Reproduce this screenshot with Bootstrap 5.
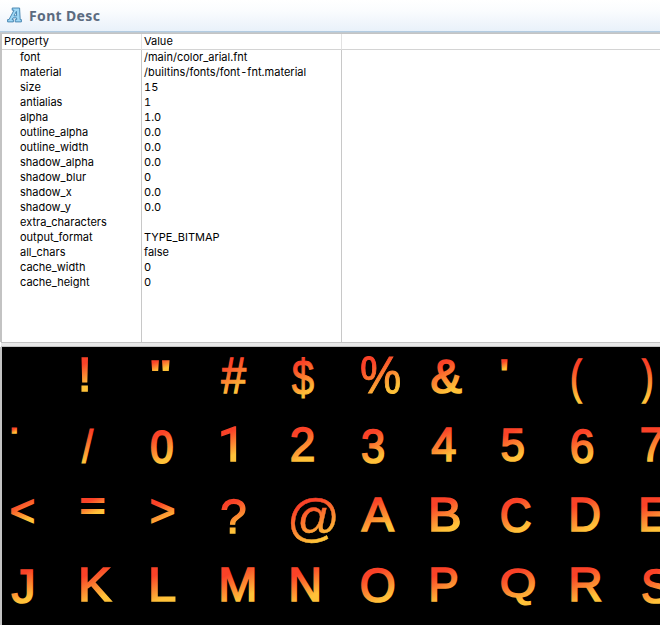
<!DOCTYPE html>
<html lang="en">
<head>
<meta charset="utf-8">
<meta name="viewport" content="width=device-width, initial-scale=1">
<title>Font Desc</title>
<link href="https://cdn.jsdelivr.net/npm/bootstrap@5.3.0/dist/css/bootstrap.min.css" rel="stylesheet">
<style>
html,body{height:100%}
body{font-family:Inter,"Liberation Sans",sans-serif;font-size:11px;line-height:15px;font-variant-numeric:tabular-nums;color:#000;background:#fff}
.title-bar{height:31px;padding:0 0 0 7px;background:linear-gradient(#fff,#fafcfe 35%,#e9f1fa)}
.title-bar h1{font:700 14px/20px "Noto Sans","Open Sans",sans-serif;color:#5b6b80;margin:1px 0 0 7px;letter-spacing:.35px}
.top-rule{height:3px;background:linear-gradient(#b3cce2 0 1px,#c0c9d0 1px 2px,#c4c4c4 2px)}
.pane{border-left:2px solid #c3c3c3}
.props{height:308px}
.col-prop{width:140px}
.col-val{width:200px}
.props .head-cell{height:16px;border-bottom:1px solid #d4d4d4;padding-left:2px;line-height:15px}
.props .col-prop .head-cell,.props .col-val .head-cell{border-right:1px solid #e2e2e2}
.rows-cell{height:292px;border-right:1px solid #c8c8c8}
.col-prop .rows-cell{padding-left:18px}
.col-val .rows-cell{padding-left:2px}
.rows-cell div{height:15px;white-space:pre}
.path-text{letter-spacing:.02px}
.splitter{height:5px;border:1px solid #c3c3c3;border-width:1px 0;background:#e8e8e8;margin-left:1px}
.preview{background:#000;height:278px;padding:7px 0 0 9px}
.glyph-row{height:70px}
.glyph{width:70px;height:70px;flex:none;overflow:visible;display:block}
</style>
<script src="https://cdn.jsdelivr.net/npm/bootstrap@5.3.0/dist/js/bootstrap.bundle.min.js"></script>
</head>
<body class="overflow-hidden">
<div class="vh-100 d-flex flex-column overflow-hidden">
  <header class="title-bar d-flex align-items-center flex-shrink-0">
    <svg width="15" height="17" viewBox="0 0 15 17" aria-hidden="true">
      <path d="M5.2 1h7.4l.6 11.6h1.2v2.3H8.2v-2.3h1.5l-.1-1.7H6l-.9 1.7h1.3v2.3H.6v-2.3H2L7 3.2H5.2zM7 8.8h2.6l-.2-4.4z" fill="#9fd8f6" fill-rule="evenodd" stroke="#3f7fab" stroke-width=".9" stroke-linejoin="round"/>
    </svg>
    <h1>Font Desc</h1>
  </header>
  <div class="top-rule flex-shrink-0"></div>
  <section class="props pane d-flex flex-shrink-0">
    <div class="col-prop">
      <div class="head-cell">Property</div>
      <div class="rows-cell"><div>font</div><div>material</div><div>size</div><div>antialias</div><div>alpha</div><div>outline_alpha</div><div>outline_width</div><div>shadow_alpha</div><div>shadow_blur</div><div>shadow_x</div><div>shadow_y</div><div>extra_characters</div><div>output_format</div><div>all_chars</div><div>cache_width</div><div>cache_height</div></div>
    </div>
    <div class="col-val">
      <div class="head-cell">Value</div>
      <div class="rows-cell"><div>/main/color_arial.fnt</div><div class="path-text">/builtins/fonts/font-fnt.material</div><div>15</div><div>1</div><div>1.0</div><div>0.0</div><div>0.0</div><div>0.0</div><div>0</div><div>0.0</div><div>0.0</div><div></div><div>TYPE_BITMAP</div><div>false</div><div>0</div><div>0</div></div>
    </div>
    <div class="flex-grow-1"><div class="head-cell"></div></div>
  </section>
  <div class="splitter flex-shrink-0"></div>
  <main class="preview pane flex-shrink-0 overflow-hidden" id="preview"></main>
</div>
<script>
// Each glyph: character, then its ink box inside a 70px cell: left, top, right, bottom.
const rows = [
  [[' ',0,0,1,1],['!',0,2.7,7,38],['"',0,5,18.3,16.7],['#',-.3,4,26,40],['$',.3,3,23.3,45.5],['%',0,3,39.3,40.5],['&',0,4,31,40.3],["'",0,5,6.3,17],['(',0,4,11.3,50],[')',.5,4,11.7,50]],
  [['.',0,3.5,6,10],['/',.5,4,13,40],['0',-.5,4.7,22.5,40.3],['1',0,2.4,15.3,38],['2',0,2.7,23.3,38],['3',.5,4.6,23.3,40.3],['4',0,2.7,25,38],['5',0,3,23,38.5],['6',0,4.6,22.5,40.3],['7',0,3,23,38]],
  [['<',0,5,23.5,30],['=',0,4,24,20.7],['>',0,5,23.7,30],['?',0,4,25,39.7],['@',0,4,45.3,50],['A',0,3,34,38],['B',0,3,29.3,38],['C',0,4,30,40],['D',0,3,29.3,38],['E',0,3,28,38]],
  [['J',.3,4.7,22.3,40.3],['K',0,3,30.7,38],['L',0,3,24.7,38],['M',0,3,34,38],['N',0,3,28,38],['O',0,4,33.5,40],['P',0,3,26.7,38],['Q',0,3,34,42],['R',0,3,30.7,38],['S',.5,4,29,40.3]]
];
const NS = 'http://www.w3.org/2000/svg';
const strokes = {'@': .4, '%': .9, '$': 1, '?': 1.3, '#': 1.2, '!': 1.3, '=': 2.3, '0': 2.1, '1': 1.3, '/': 1.2};
const ctx = document.createElement('canvas').getContext('2d');
const make = (tag, attrs, parent) => {
  const e = document.createElementNS(NS, tag);
  for (const k in attrs) e.setAttribute(k, attrs[k]);
  parent.appendChild(e);
  return e;
};
rows.forEach((row, r) => {
  const line = document.createElement('div');
  line.className = 'glyph-row d-flex';
  document.getElementById('preview').appendChild(line);
  row.forEach(([ch, l, t, rt, b], c) => {
    const svg = make('svg', {class: 'glyph', viewBox: '0 0 70 70'}, line);
    if (ch === ' ') return;
    const family = ch === '1' ? 'Roboto' : 'Liberation Sans';
    const stroke = strokes[ch] || 1.7;
    ctx.font = `480px "${family}"`;
    const m = ctx.measureText(ch);
    const left = -m.actualBoundingBoxLeft / 10, right = m.actualBoundingBoxRight / 10;
    const top = -m.actualBoundingBoxAscent / 10, bottom = m.actualBoundingBoxDescent / 10;
    const sx = (rt - l - stroke) / (right - left), sy = (b - t - stroke) / (bottom - top);
    const h = stroke / 2;
    // gradient line tilted 25 degrees off vertical, spanning the ink box
    const w2 = (right - left) / 2, h2 = (bottom - top) / 2, cx = left + w2, cy = top + h2;
    const dx = Math.sin(.44), dy = Math.cos(.44), len = w2 * dx + h2 * dy;
    const id = 'g' + r + '_' + c;
    const g = make('linearGradient', {id, gradientUnits: 'userSpaceOnUse', x1: cx - dx * len, y1: cy - dy * len, x2: cx + dx * len, y2: cy + dy * len}, svg);
    make('stop', {offset: .2, 'stop-color': '#fa4228'}, g);
    make('stop', {offset: .82, 'stop-color': '#ffc239'}, g);
    const text = make('text', {
      transform: `translate(${l + h - left * sx} ${t + h - top * sy}) scale(${sx} ${sy})`,
      'font-family': `"${family}", Arial, sans-serif`, 'font-size': 48,
      fill: `url(#${id})`, stroke: `url(#${id})`, 'stroke-width': stroke
    }, svg);
    text.textContent = ch;
  });
});
</script>
</body>
</html>
